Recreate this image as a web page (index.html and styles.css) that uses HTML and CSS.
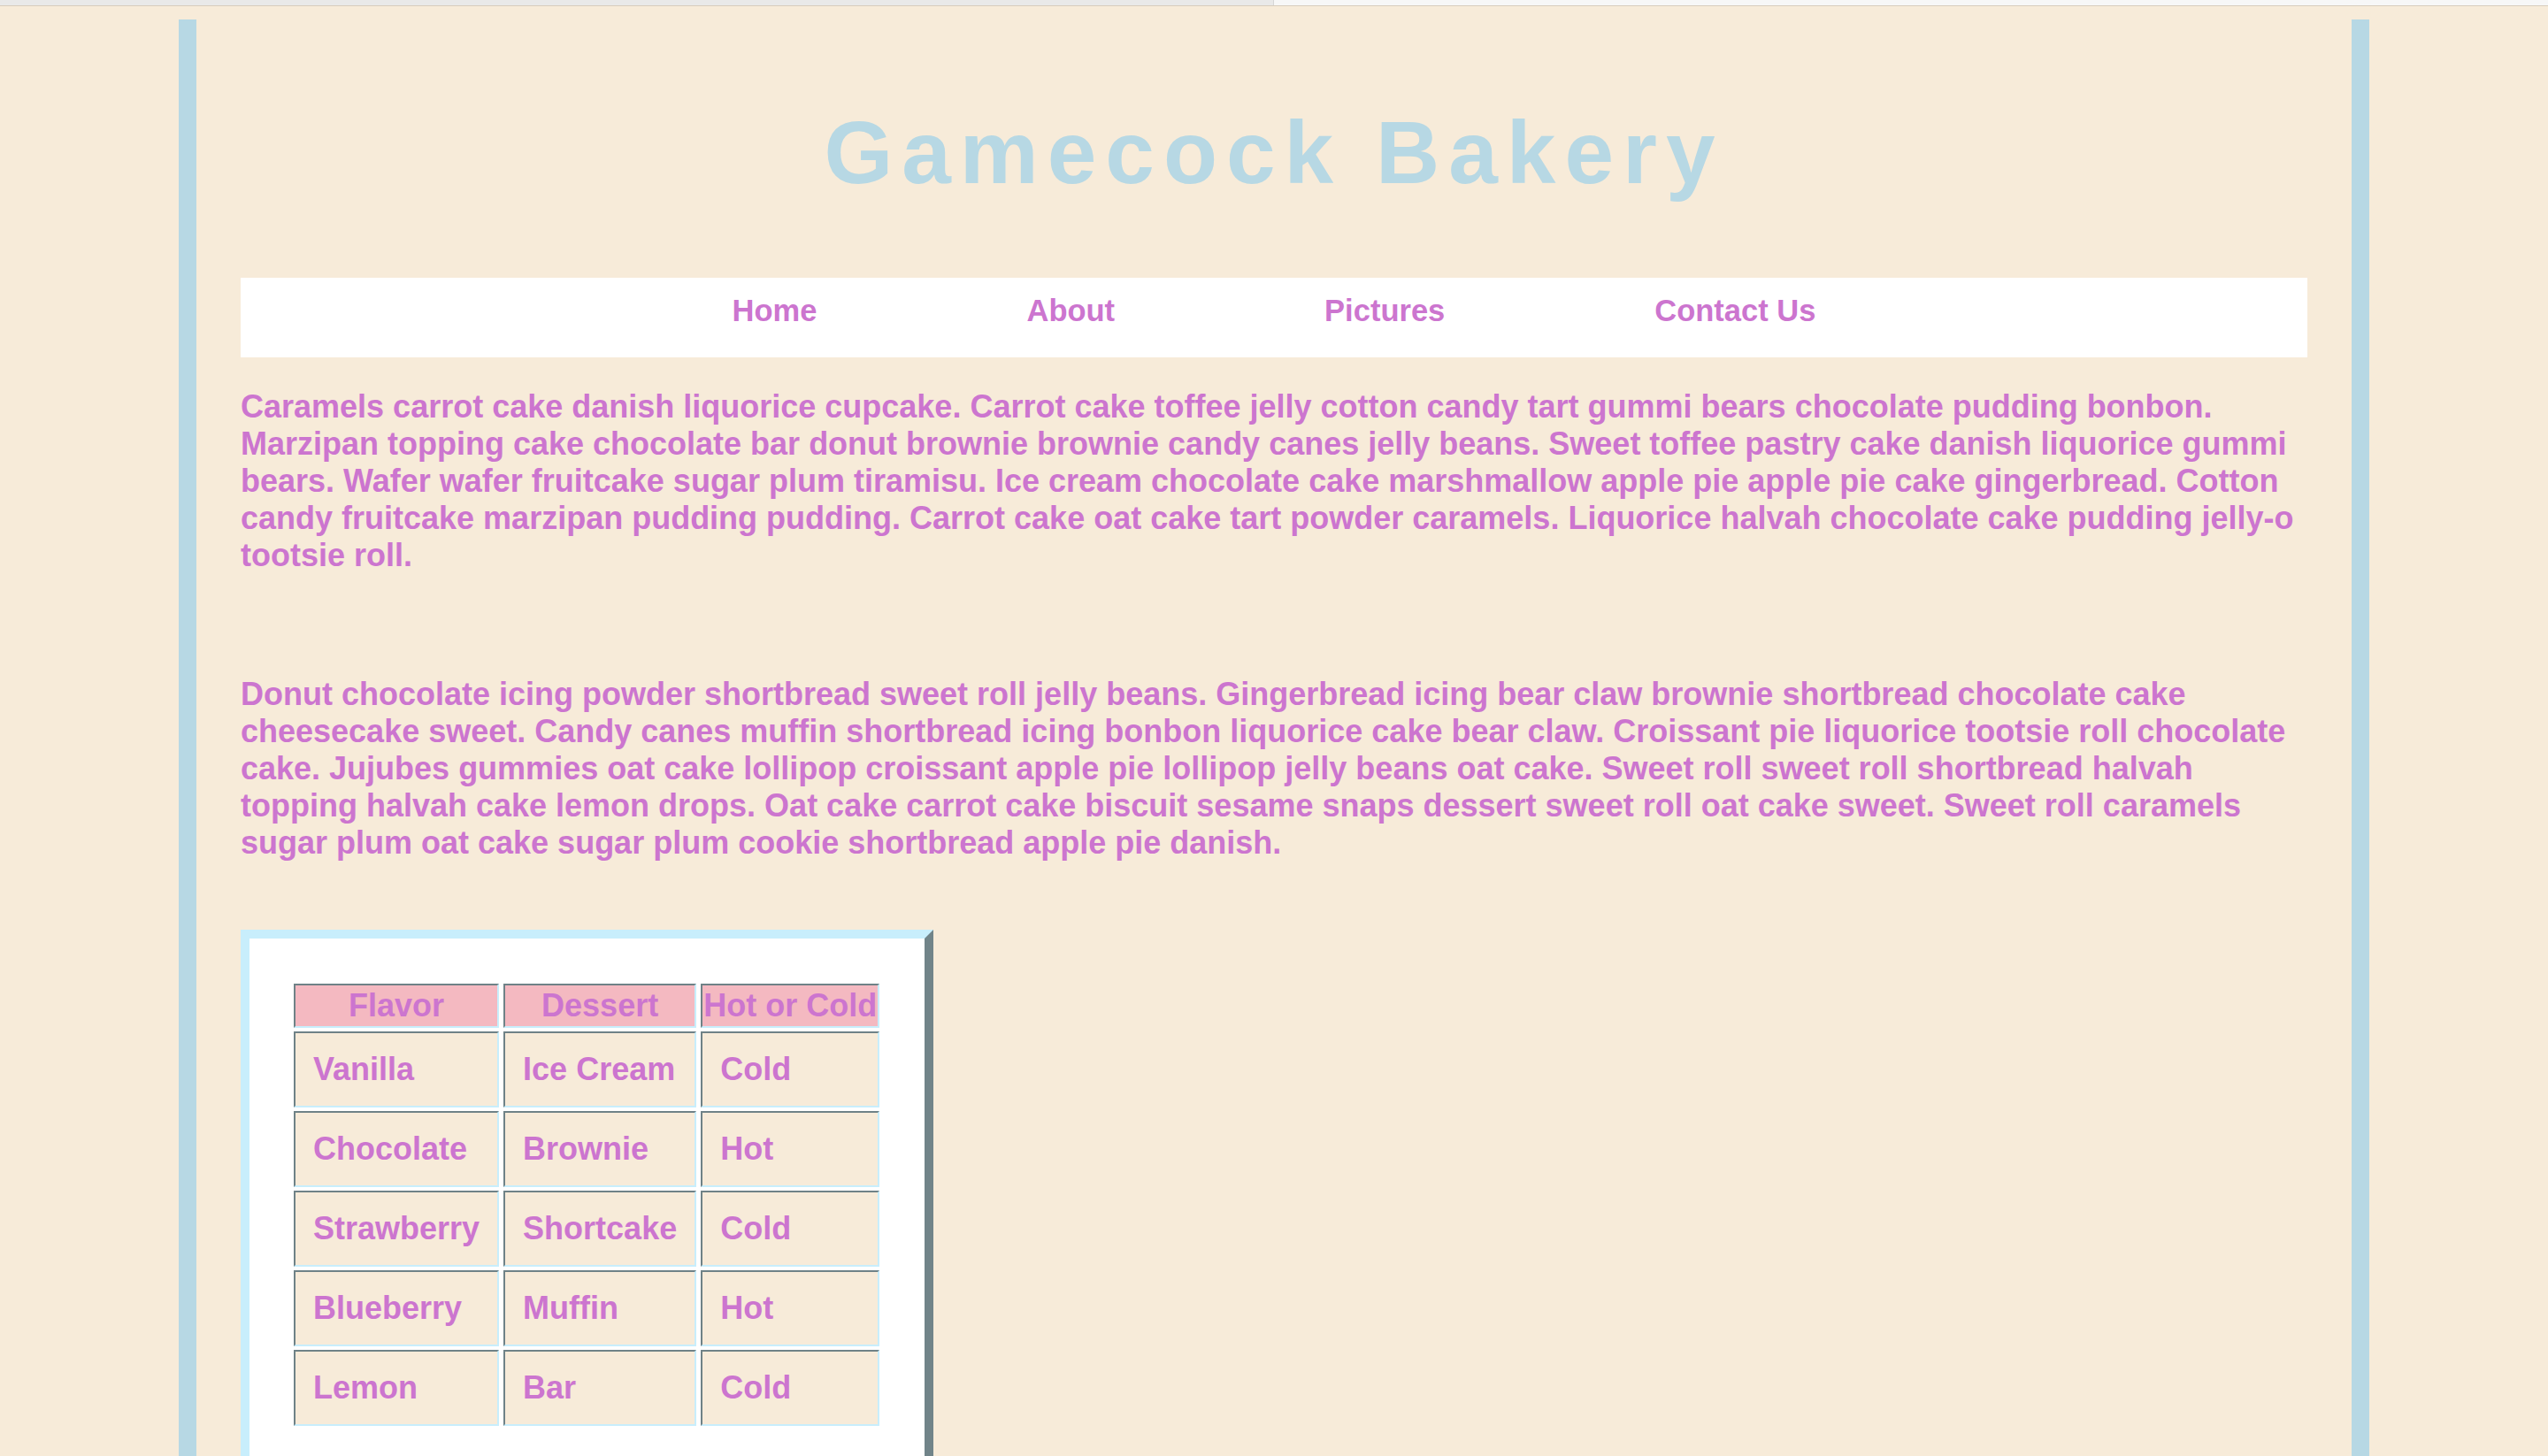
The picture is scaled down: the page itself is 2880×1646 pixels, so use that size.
FILE: index.html
```html
<!DOCTYPE html>
<html lang="en">
<head>
<meta charset="utf-8">
<title>Gamecock Bakery</title>
<link rel="stylesheet" href="styles.css">
</head>
<body>
<div class="tabbar"><div class="tab-left"></div><div class="tab-right"></div></div>
<div class="page">
  <h1 class="title">Gamecock Bakery</h1>
  <nav class="nav">
    <a class="nav-link" href="#">Home</a>
    <a class="nav-link" href="#">About</a>
    <a class="nav-link" href="#">Pictures</a>
    <a class="nav-link" href="#">Contact Us</a>
  </nav>
  <p class="text text-first">Caramels carrot cake danish liquorice cupcake. Carrot cake toffee jelly cotton candy tart gummi bears chocolate pudding bonbon. Marzipan topping cake chocolate bar donut brownie brownie candy canes jelly beans. Sweet toffee pastry cake danish liquorice gummi bears. Wafer wafer fruitcake sugar plum tiramisu. Ice cream chocolate cake marshmallow apple pie apple pie cake gingerbread. Cotton candy fruitcake marzipan pudding pudding. Carrot cake oat cake tart powder caramels. Liquorice halvah chocolate cake pudding jelly-o tootsie roll.</p>
  <p class="text text-second">Donut chocolate icing powder shortbread sweet roll jelly beans. Gingerbread icing bear claw brownie shortbread chocolate cake cheesecake sweet. Candy canes muffin shortbread icing bonbon liquorice cake bear claw. Croissant pie liquorice tootsie roll chocolate cake. Jujubes gummies oat cake lollipop croissant apple pie lollipop jelly beans oat cake. Sweet roll sweet roll shortbread halvah topping halvah cake lemon drops. Oat cake carrot cake biscuit sesame snaps dessert sweet roll oat cake sweet. Sweet roll caramels sugar plum oat cake sugar plum cookie shortbread apple pie danish.</p>
  <div class="table-box">
    <table class="menu-table">
      <thead>
        <tr><th>Flavor</th><th>Dessert</th><th>Hot or Cold</th></tr>
      </thead>
      <tbody>
        <tr><td>Vanilla</td><td>Ice Cream</td><td>Cold</td></tr>
        <tr><td>Chocolate</td><td>Brownie</td><td>Hot</td></tr>
        <tr><td>Strawberry</td><td>Shortcake</td><td>Cold</td></tr>
        <tr><td>Blueberry</td><td>Muffin</td><td>Hot</td></tr>
        <tr><td>Lemon</td><td>Bar</td><td>Cold</td></tr>
      </tbody>
    </table>
  </div>
</div>
</body>
</html>
```

FILE: styles.css
```css
html, body {
  margin: 0;
  padding: 0;
}
body {
  background: #f7ebd9;
  font-family: "Liberation Sans", Arial, Helvetica, sans-serif;
  font-weight: bold;
  color: #cc75cf;
  overflow: hidden;
}
.tabbar {
  display: flex;
  height: 6px;
  border-bottom: 1px solid #d8cdbd;
}
.tab-left {
  width: 1439px;
  background: #e9e9e9;
}
.tab-right {
  flex: 1;
  background: #f7f7f7;
  border-left: 1px solid #d6d6d6;
}
.page {
  display: flow-root;
  width: 2336px;
  margin: 15px auto 0;
  padding: 0 50px;
  border-left: 20px solid #b7d8e4;
  border-right: 20px solid #b7d8e4;
  min-height: 1700px;
}
.title {
  margin: 93px 0 84px;
  font-size: 100px;
  line-height: normal;
  letter-spacing: 10px;
  text-align: center;
  color: #b7d8e4;
  font-weight: bold;
}
.nav {
  display: flex;
  justify-content: center;
  gap: 237px;
  height: 72px;
  padding-top: 18px;
  background: #ffffff;
  font-size: 34.5px;
}
.nav-link {
  color: #cc75cf;
  text-decoration: none;
  line-height: normal;
  height: 40px;
}
.text {
  font-size: 36px;
  line-height: normal;
  margin: 0;
}
.text-first {
  margin-top: 35px;
}
.text-second {
  margin-top: 115px;
  margin-bottom: 77px;
}
.table-box {
  display: inline-block;
  background: #ffffff;
  border-style: solid;
  border-width: 10px;
  border-color: #c8eefc #718489 #718489 #c8eefc;
  padding: 47px 46px 47px 45px;
}
.menu-table {
  border-collapse: separate;
  border-spacing: 5px 4px;
  font-size: 36px;
}
.menu-table th,
.menu-table td {
  border-style: solid;
  border-width: 2px;
  border-color: #6f8287 #c8eefc #c8eefc #6f8287;
  line-height: normal;
}
.menu-table th {
  background: #f4b9c1;
  padding: 2px 1px;
  line-height: 42px;
  text-align: center;
}
.menu-table td {
  background: #f7ebd9;
  padding: 20px;
  text-align: left;
}
```
